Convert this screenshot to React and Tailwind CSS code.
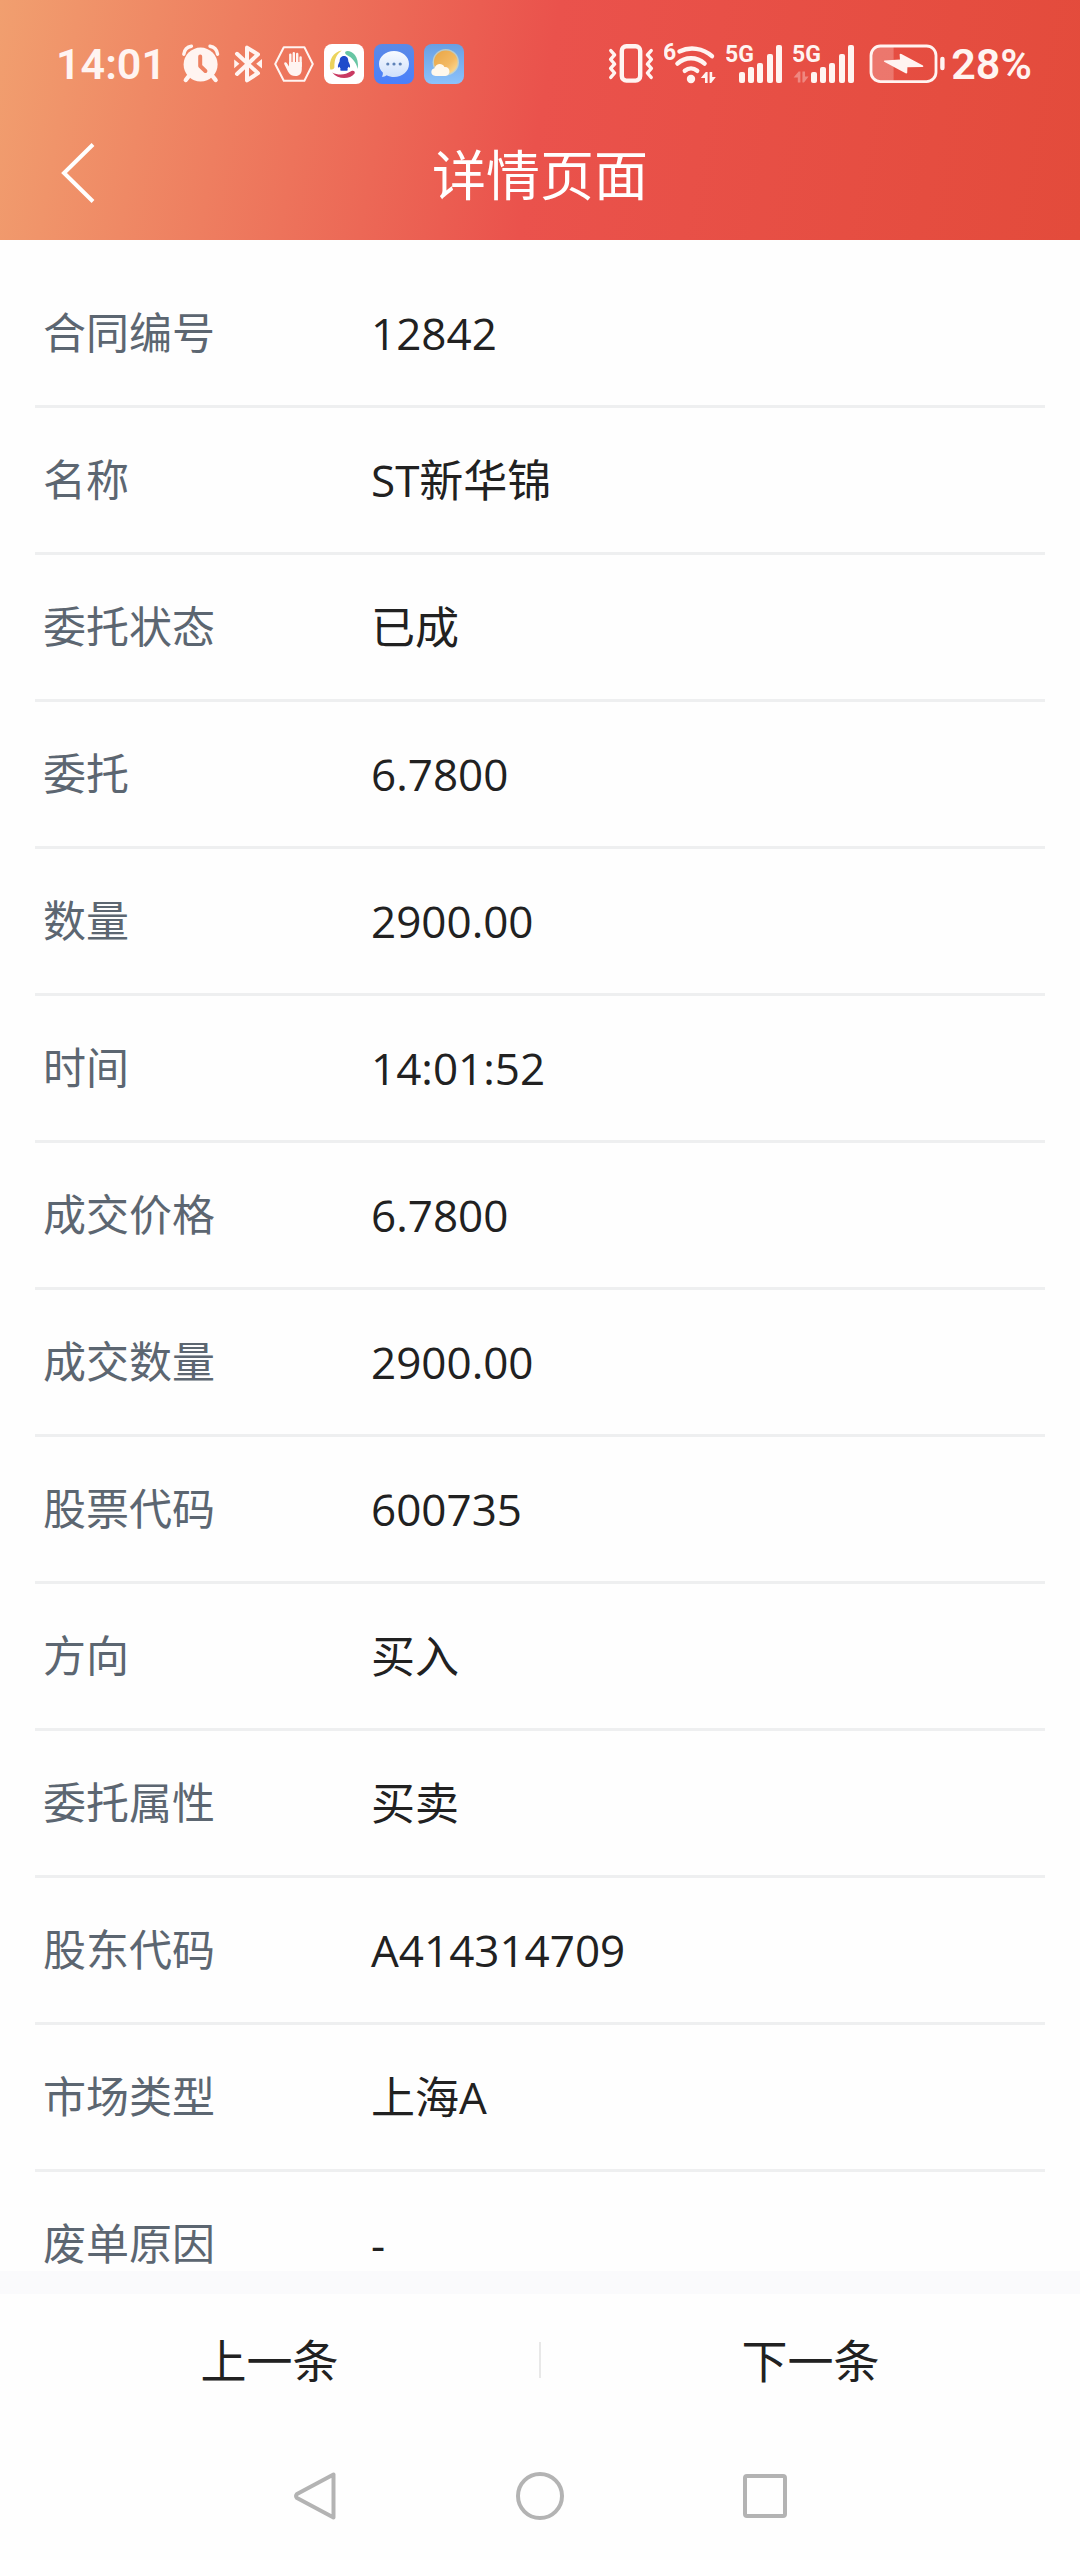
import React from "react";

const details = [
  ["合同编号", "12842"],
  ["名称", "ST新华锦"],
  ["委托状态", "已成"],
  ["委托", "6.7800"],
  ["数量", "2900.00"],
  ["时间", "14:01:52"],
  ["成交价格", "6.7800"],
  ["成交数量", "2900.00"],
  ["股票代码", "600735"],
  ["方向", "买入"],
  ["委托属性", "买卖"],
  ["股东代码", "A414314709"],
  ["市场类型", "上海A"],
  ["废单原因", "-"],
];

const ICON = "#fff4f1";

function AlarmIcon() {
  return (
    <svg width="38" height="40" viewBox="0 0 38 40" fill="none" aria-hidden="true">
      <circle cx="18.6" cy="20.6" r="17" fill={ICON} />
      <path d="M1.8 10.2C2.4 6 5.4 2.8 9.4 2.2M35.6 10.2C35 6 32 2.8 28 2.2" stroke={ICON} strokeWidth="3.4" strokeLinecap="round" />
      <path d="M6.5 32.5L3.8 36M30.8 32.5L33.6 36" stroke={ICON} strokeWidth="4.4" strokeLinecap="round" />
      <path d="M18.2 12.4V22L23.4 27" stroke="#ee8162" strokeWidth="4" strokeLinecap="round" strokeLinejoin="round" />
    </svg>
  );
}

function BluetoothIcon() {
  return (
    <svg width="28" height="40" viewBox="0 0 28 40" fill="none" aria-hidden="true">
      <path d="M3 9.8L24 29.2L13 36.4V3.6L24 10.4L3 30" stroke={ICON} strokeWidth="4" strokeLinecap="round" strokeLinejoin="round" />
      <path d="M0.2 15.4L5.4 19.8L0.2 24.2ZM28 15L22.2 19.8L28 24.6Z" fill={ICON} />
    </svg>
  );
}

function HandIcon() {
  return (
    <svg width="40" height="40" viewBox="0 0 40 40" fill="none" aria-hidden="true">
      <path d="M1.2 20L9.8 3.2H30.4L38.8 20L30.4 36.8H9.8Z" stroke={ICON} strokeWidth="2" strokeLinejoin="round" />
      <path d="M16.3 20V10.6M19.8 20V9.2M23.2 20V10M26.6 22V13.4" stroke={ICON} strokeWidth="2.4" strokeLinecap="round" />
      <path d="M15 18H27.8V25C27.8 29.6 25.4 32 21.6 32C17.8 32 15.6 30.6 14 27.4L10.2 20C9.8 18.4 11.8 17.6 12.8 19L15 22.4Z" fill={ICON} />
    </svg>
  );
}

function PenguinIcon() {
  return (
    <svg width="40" height="40" viewBox="0 0 40 40" aria-hidden="true">
      <rect width="40" height="40" rx="8" fill="#fff" />
      <path d="M6.2 25.4C4.6 15.2 9.4 8 17.8 6.4C12.6 10.4 10.2 14.6 10.4 23.4C10 25.2 7.4 25.8 6.2 25.4Z" fill="#ecd35b" />
      <path d="M21.4 7.8C24 5.2 35.8 9 33.8 25C32 18.8 29.4 14.4 22.4 10.8C21.2 10 20.8 8.8 21.4 7.8Z" fill="#68c6a4" />
      <path d="M8.2 28.4C14 31.4 20.6 31.6 27.4 27C29.8 26 31.4 27.6 30.6 29.4C25.8 35.6 14 35.8 8.2 28.4Z" fill="#c93a62" />
      <path d="M20 12C16.9 12 15.6 14.4 15.7 17.2C14.6 19.4 13.6 21.6 14 23.4C14.5 24 15.2 23 15.6 22.4C15.8 23.6 16.2 24.4 16.8 25C15.8 25.6 15.8 26.8 17.6 26.8H22.4C24.2 26.8 24.2 25.6 23.2 25C23.8 24.4 24.2 23.6 24.4 22.4C24.8 23 25.5 24 26 23.4C26.4 21.6 25.4 19.4 24.3 17.2C24.4 14.4 23.1 12 20 12Z" fill="#1f4bcb" />
    </svg>
  );
}

function MessageIcon() {
  return (
    <svg width="40" height="40" viewBox="0 0 40 40" aria-hidden="true">
      <defs>
        <linearGradient id="msgBg" x1="0" y1="0" x2="0" y2="1">
          <stop offset="0" stopColor="#5b8ae6" />
          <stop offset="1" stopColor="#4a80fb" />
        </linearGradient>
        <linearGradient id="msgBubble" x1="0" y1="0" x2="0" y2="1">
          <stop offset="0" stopColor="#f8fbff" />
          <stop offset="1" stopColor="#cfe0fb" />
        </linearGradient>
      </defs>
      <rect width="40" height="40" rx="8" fill="url(#msgBg)" />
      <path d="M20 7C28.4 7 35 12.6 35 20C35 27.4 28.4 33 20 33C17.4 33 14.8 32.2 12.6 31.2C11.2 32.2 9.6 32.8 7.8 32.8C8.8 31.4 9 30 8.8 28.4C6.4 26.2 5 23.4 5 20C5 12.6 11.6 7 20 7Z" fill="url(#msgBubble)" />
      <g fill="#5f83b8">
        <circle cx="13.8" cy="20" r="1.6" />
        <circle cx="20" cy="20" r="1.6" />
        <circle cx="26.2" cy="20" r="1.6" />
      </g>
    </svg>
  );
}

function WeatherIcon() {
  return (
    <svg width="40" height="40" viewBox="0 0 40 40" aria-hidden="true">
      <defs>
        <linearGradient id="sky" x1="0" y1="0" x2="0" y2="1">
          <stop offset="0" stopColor="#689fe4" />
          <stop offset="1" stopColor="#8cc2fb" />
        </linearGradient>
        <linearGradient id="sun" x1="0" y1="0" x2="1" y2="1">
          <stop offset="0" stopColor="#e8a545" />
          <stop offset="0.6" stopColor="#f3b962" />
          <stop offset="1" stopColor="#fde3a0" />
        </linearGradient>
      </defs>
      <rect width="40" height="40" rx="8" fill="url(#sky)" />
      <circle cx="21.8" cy="18.2" r="13.2" fill="#e9e3b6" opacity="0.6" />
      <circle cx="21.8" cy="18.2" r="11.8" fill="url(#sun)" />
      <path d="M11.6 32C5.8 31.6 6.4 24.4 10.6 24.2C12 19.2 18.4 18.8 20.4 23C26.8 22.4 27.2 31.6 21.4 32Z" fill="#fff8ec" />
    </svg>
  );
}

function VibrateIcon() {
  return (
    <svg width="46" height="42" viewBox="0 0 46 42" fill="none" stroke={ICON} strokeLinejoin="round" strokeLinecap="round" aria-hidden="true">
      <rect x="13.8" y="3.2" width="18.4" height="34.4" rx="4.6" strokeWidth="4.4" />
      <path d="M2.8 7.6L6.6 11.8L2.6 16.4L6.6 21L2.6 25.4L6.6 30L2.8 34.4M43.2 7.6L39.4 11.8L43.4 16.4L39.4 21L43.4 25.4L39.4 30L43.2 34.4" strokeWidth="3.4" />
    </svg>
  );
}

function WifiIcon() {
  return (
    <svg width="52" height="58" viewBox="0 -8 52 58" fill="none" aria-hidden="true">
      <text x="-1" y="17" fontSize="23" fontWeight="700" fontFamily="Roboto, sans-serif" fill={ICON}>6</text>
      <g stroke={ICON} strokeWidth="4.4" strokeLinecap="round">
        <path d="M15.4 8.4C26 3.4 39 5 48 13.2" />
        <path d="M13.4 20.6C21.4 13.4 32.6 13.4 40.6 20.6" />
        <path d="M20.8 27.8C24.6 24.8 29.4 24.8 33.2 27.8" />
      </g>
      <circle cx="27" cy="36" r="4.2" fill={ICON} />
      <path d="M36.8 35L41.8 29H43.6V40H41V35ZM45.6 29H48.2V34H51.8L47.2 40H45.6Z" fill={ICON} />
    </svg>
  );
}

function SignalIcon({ idle }) {
  const shift = idle ? 5 : 0;
  const bars = [
    [13, 28],
    [22, 23],
    [31, 19],
    [41, 10],
    [50, 1],
  ];
  return (
    <svg width={57 + shift} height="56" viewBox={idle ? "0 -8 62 56" : "0 -8 57 56"} aria-hidden="true">
      <text x="-1" y="18" fontSize="23" fontWeight="700" fontFamily="Roboto, sans-serif" fill={ICON}>5G</text>
      {bars.map(([x, y]) => (
        <rect key={x} x={x + shift} y={y} width="6" height={39 - y} rx="2" fill={ICON} />
      ))}
      {idle && <path d="M0.6 33.5L5.6 27.5H7.4V38.5H4.8V33.5ZM9.4 27.5H12V32.5H15.6L11 38.5H9.4Z" fill={ICON} opacity="0.35" />}
    </svg>
  );
}

function BatteryIcon() {
  return (
    <svg width="76" height="40" viewBox="0 0 76 40" aria-hidden="true">
      <path d="M24.6 2H11A9 9 0 0 0 2 11V28.6A9 9 0 0 0 11 37.6H24.6Z" fill={ICON} opacity="0.25" />
      <rect x="2" y="2" width="65" height="35.6" rx="9.4" fill="none" stroke={ICON} strokeWidth="2.8" />
      <rect x="71.2" y="12.8" width="4.4" height="13.4" rx="2.2" fill={ICON} />
      <path d="M15.4 16.4L31 15.6L30.6 10.2Q31.4 9.4 32.4 10L54 21.4Q55 22.6 53.6 23L38.4 23.2L38.2 29Q37.6 29.8 36.6 29.2L15.2 17.8Q14.4 17 15.4 16.4Z" fill={ICON} />
    </svg>
  );
}

function StatusBar() {
  return (
    <div className="flex h-16 items-center justify-between pr-12 pl-14 font-['Roboto','Noto_Sans_CJK_SC',sans-serif] text-[43px] font-semibold text-[#fff4f1]">
      <div className="flex items-center">
        <span className="w-[126px]">14:01</span>
        <AlarmIcon />
        <span className="ml-3.5"><BluetoothIcon /></span>
        <span className="ml-3"><HandIcon /></span>
        <span className="ml-2.5"><PenguinIcon /></span>
        <span className="ml-2.5"><MessageIcon /></span>
        <span className="ml-2.5"><WeatherIcon /></span>
      </div>
      <div className="flex items-center">
        <VibrateIcon />
        <span className="ml-2.5"><WifiIcon /></span>
        <span className="ml-2.5"><SignalIcon /></span>
        <span className="ml-2.5"><SignalIcon idle /></span>
        <span className="ml-3.5"><BatteryIcon /></span>
        <span className="ml-1.5">28%</span>
      </div>
    </div>
  );
}

export default function App() {
  return (
    <div className="flex h-screen flex-col bg-[#fefefe] font-['Open_Sans','Noto_Sans_CJK_SC',sans-serif] text-[#212121]">
      <header className="bg-[linear-gradient(100deg,#f19f6f_0%,#ea524c_50%,#e34b3b_100%)] pt-8">
        <StatusBar />
        <div className="grid h-36 grid-cols-[1fr_auto_1fr] items-center pt-2.5">
          <button type="button" aria-label="返回" className="ml-14 w-12">
            <svg width="48" height="60" viewBox="0 0 48 60" fill="none" stroke="#fff" strokeWidth="4" aria-hidden="true">
              <path d="M37 1.5L8 30L37 58.5" />
            </svg>
          </button>
          <h1 className="font-['Noto_Sans_CJK_SC',sans-serif] text-[54px] leading-[60px] text-white">详情页面</h1>
        </div>
      </header>

      <main className="min-h-0 flex-1 overflow-y-auto px-[35px] pt-[21px] [scrollbar-width:none]">
        <dl>
          {details.map(([label, value]) => (
            <div key={label} className="flex h-[147px] items-center border-b-3 border-[#eeeff0]">
              <dt className="w-84 pl-2 text-[43px] leading-[48px] text-[#5c6671]">{label}</dt>
              <dd className="flex-1 text-[44px] leading-[48px]">{value}</dd>
            </div>
          ))}
        </dl>
      </main>

      <div className="h-[23px] shrink-0 bg-[#fafafc]" />
      <div className="flex shrink-0 items-center py-8 text-[46px] leading-[68px]">
        <button type="button" className="flex-1">上一条</button>
        <span className="h-9 w-0.5 bg-[#e8e8e8]" />
        <button type="button" className="flex-1">下一条</button>
      </div>

      <nav aria-label="系统导航" className="flex shrink-0 justify-center gap-[177px] pt-[46px] pb-10">
        <button type="button" aria-label="后退">
          <svg width="48" height="48" viewBox="0 0 48 48" fill="none" stroke="#b3b3b3" strokeWidth="4" strokeLinejoin="round" aria-hidden="true">
            <path d="M42.5 2.5V45.5L6 26Q4 24 6 22Z" />
          </svg>
        </button>
        <button type="button" aria-label="主屏幕">
          <svg width="48" height="48" viewBox="0 0 48 48" fill="none" stroke="#b3b3b3" strokeWidth="4" aria-hidden="true">
            <circle cx="24" cy="24" r="22" />
          </svg>
        </button>
        <button type="button" aria-label="最近任务">
          <svg width="48" height="48" viewBox="0 0 48 48" fill="none" stroke="#b3b3b3" strokeWidth="4" aria-hidden="true">
            <rect x="4" y="4" width="40" height="40" rx="2" />
          </svg>
        </button>
      </nav>
    </div>
  );
}
